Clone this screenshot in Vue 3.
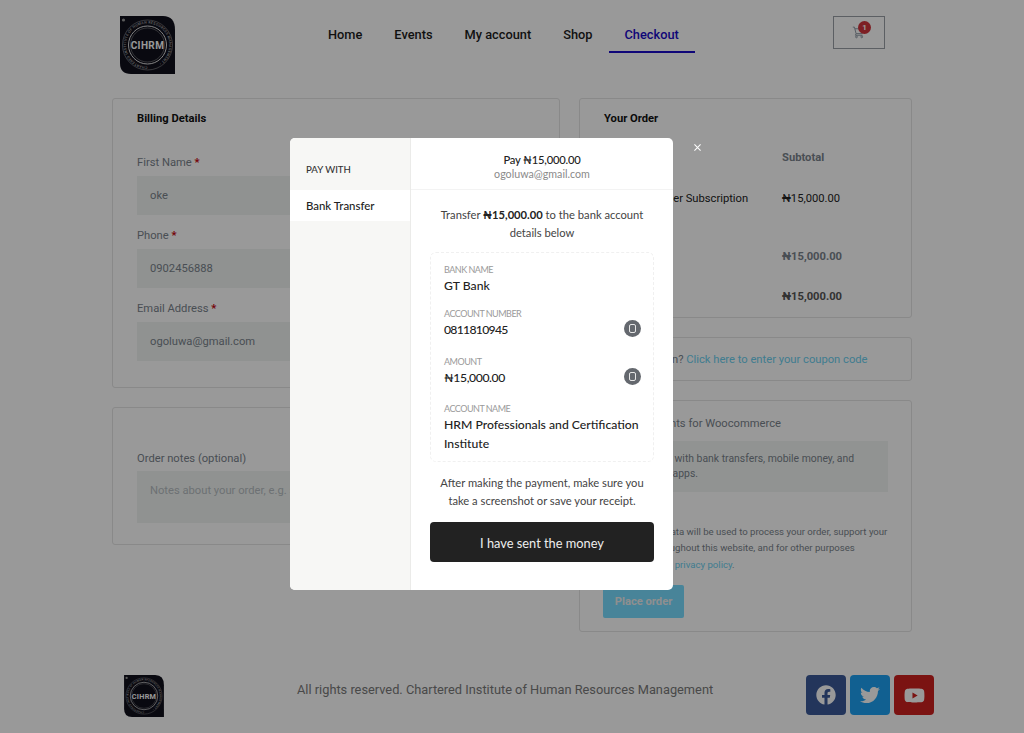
<script setup>
const navItems = ['Home', 'Events', 'My account', 'Shop', 'Checkout']
const fields = [
  { label: 'First Name', value: 'oke' },
  { label: 'Phone', value: '0902456888' },
  { label: 'Email Address', value: 'ogoluwa@gmail.com' }
]
</script>

<template>
  <div class="page">
    <svg class="defs" width="0" height="0" aria-hidden="true">
      <defs>
        <symbol id="logo" viewBox="0 0 55 58">
          <path d="M0 0H43Q55 0 55 14V58H11Q0 58 0 47Z" fill="#10101c" />
          <circle cx="3.5" cy="4" r="1.6" fill="#999" />
          <circle cx="27.5" cy="29" r="25" fill="none" stroke="#aaa" stroke-width=".5" />
          <circle cx="27.5" cy="29" r="19" fill="none" stroke="#ddd" stroke-width="1" />
          <circle cx="27.5" cy="29" r="17" fill="none" stroke="#999" stroke-width=".5" />
          <path id="ring" d="M27.5 50.5A21.5 21.5 0 1 1 27.6 50.5" fill="none" />
          <text class="ring-text"><textPath href="#ring">CHARTERED INSTITUTE OF HUMAN RESOURCES MANAGEMENT •</textPath></text>
          <text class="logo-text" x="27.5" y="32.8" text-anchor="middle">CIHRM</text>
        </symbol>
      </defs>
    </svg>

    <header class="header">
      <svg class="logo"><use href="#logo" /></svg>
      <nav class="nav">
        <a v-for="item in navItems" :key="item" class="nav-link" :class="{ active: item === 'Checkout' }">{{ item }}</a>
      </nav>
      <div class="cart">
        <svg class="cart-icon" viewBox="0 0 16 16" fill="none" stroke="#8f98a4" stroke-width="1.2">
          <path d="M1 2h2l2 8h7.5l1.5-6H3.6" />
          <path d="M5 10l-.8 2H13" />
          <circle cx="5.5" cy="14" r="1.1" />
          <circle cx="12" cy="14" r="1.1" />
        </svg>
        <span class="badge">1</span>
      </div>
    </header>

    <main class="columns">
      <div class="col">
        <section class="card billing">
          <h2 class="title">Billing Details</h2>
          <div v-for="f in fields" :key="f.label" class="field">
            <label class="label">{{ f.label }} <b class="req">*</b></label>
            <div class="input">{{ f.value }}</div>
          </div>
        </section>
        <section class="card notes">
          <label class="label">Order notes (optional)</label>
          <div class="textarea">Notes about your order, e.g. special notes for delivery.</div>
        </section>
      </div>

      <div class="col">
        <section class="card order">
          <h2 class="title">Your Order</h2>
          <div class="order-table">
            <div class="row"><span class="head">Product</span><span class="head">Subtotal</span></div>
            <div class="row spaced"><span>Annual Member Subscription</span><span>₦15,000.00</span></div>
            <div class="row"><span class="head">Subtotal</span><span class="head">₦15,000.00</span></div>
            <div class="row"><span class="total">Total</span><span class="total">₦15,000.00</span></div>
          </div>
        </section>
        <section class="card coupon">
          Have a coupon? <a class="link">Click here to enter your coupon code</a>
        </section>
        <section class="card payment">
          <div class="pay-title">Direct Payments for Woocommerce</div>
          <div class="pay-box">Pay securely with bank transfers, mobile money, and via our bank apps.</div>
          <p class="privacy">Your personal data will be used to process your order, support your experience throughout this website, and for other purposes described in our <a class="link">privacy policy</a>.</p>
          <button class="place">Place order</button>
        </section>
      </div>
    </main>

    <footer class="footer">
      <svg class="foot-logo"><use href="#logo" /></svg>
      <p class="rights">All rights reserved. Chartered Institute of Human Resources Management</p>
      <div class="socials">
        <a class="social fb">
          <svg viewBox="0 0 512 512" width="20" height="20"><path d="M504 256C504 119 393 8 256 8S8 119 8 256c0 123.78 90.69 226.38 209.25 245V327.69h-63V256h63v-54.64c0-62.15 37-96.48 93.67-96.48 27.14 0 55.52 4.84 55.52 4.84v61h-31.28c-30.8 0-40.41 19.12-40.41 38.73V256h68.78l-11 71.69h-57.78V501C413.31 482.38 504 379.78 504 256z" /></svg>
        </a>
        <a class="social tw">
          <svg viewBox="0 0 512 512" width="20" height="20"><path d="M459.37 151.716c.325 4.548.325 9.097.325 13.645 0 138.72-105.583 298.558-298.558 298.558-59.452 0-114.68-17.219-161.137-47.106 8.447.974 16.568 1.299 25.34 1.299 49.055 0 94.213-16.568 130.274-44.832-46.132-.975-84.792-31.188-98.112-72.772 6.498.974 12.995 1.624 19.818 1.624 9.421 0 18.843-1.3 27.614-3.573-48.081-9.747-84.143-51.98-84.143-102.985v-1.299c13.969 7.797 30.214 12.67 47.431 13.319-28.264-18.843-46.781-51.005-46.781-87.391 0-19.492 5.197-37.36 14.294-52.954 51.655 63.675 129.3 105.258 216.365 109.807-1.624-7.797-2.599-15.918-2.599-24.04 0-57.828 46.782-104.934 104.934-104.934 30.213 0 57.502 12.67 76.67 33.137 23.715-4.548 46.456-13.32 66.599-25.34-7.798 24.366-24.366 44.833-46.132 57.827 21.117-2.273 41.584-8.122 60.426-16.243-14.292 20.791-32.161 39.308-52.628 54.253z" /></svg>
        </a>
        <a class="social yt">
          <svg viewBox="0 0 576 512" width="21" height="19"><path d="M549.655 124.083c-6.281-23.65-24.787-42.276-48.284-48.597C458.781 64 288 64 288 64S117.22 64 74.629 75.486c-23.497 6.322-42.003 24.947-48.284 48.597-11.412 42.867-11.412 132.305-11.412 132.305s0 89.438 11.412 132.305c6.281 23.65 24.787 41.5 48.284 47.821C117.22 448 288 448 288 448s170.78 0 213.371-11.486c23.497-6.321 42.003-24.171 48.284-47.821 11.412-42.867 11.412-132.305 11.412-132.305s0-89.438-11.412-132.305zm-317.51 213.508V175.185l142.739 81.205-142.739 81.201z" /></svg>
        </a>
      </div>
    </footer>

    <div class="overlay">
      <div class="modal">
        <button class="close" aria-label="Close">
          <svg viewBox="0 0 8 8" width="7" height="7" stroke="#fff" stroke-width="1.2"><path d="M.5.5l7 7M7.5.5l-7 7" /></svg>
        </button>
        <aside class="side">
          <div class="pay-with">PAY WITH</div>
          <div class="method">Bank Transfer</div>
        </aside>
        <div class="content">
          <div class="m-head">
            <div class="m-pay">Pay ₦15,000.00</div>
            <div class="m-mail">ogoluwa@gmail.com</div>
          </div>
          <div class="m-body">
            <p class="m-text">Transfer <b>₦15,000.00</b> to the bank account details below</p>
            <div class="details">
              <div class="d-row bank">
                <div class="d-label">BANK NAME</div>
                <div class="d-value">GT Bank</div>
              </div>
              <div class="d-row acct-row">
                <div class="d-label">ACCOUNT NUMBER</div>
                <div class="d-value acct">0811810945</div>
                <span class="copy"><i></i></span>
              </div>
              <div class="d-row amount-row">
                <div class="d-label">AMOUNT</div>
                <div class="d-value amount">₦15,000.00</div>
                <span class="copy"><i></i></span>
              </div>
              <div class="d-row">
                <div class="d-label">ACCOUNT NAME</div>
                <div class="d-value">HRM Professionals and Certification Institute</div>
              </div>
            </div>
            <p class="m-text after">After making the payment, make sure you take a screenshot or save your receipt.</p>
            <button class="sent">I have sent the money</button>
          </div>
        </div>
      </div>
    </div>
  </div>
</template>

<style>
html, body { margin: 0; background: #fff; }
</style>

<style scoped>
.page {
  position: relative;
  width: 1024px;
  height: 733px;
  overflow: hidden;
  background: #fff;
  font-family: Roboto, "Liberation Sans", sans-serif;
  font-size: 11.2px;
  color: #333;
}
.defs { position: absolute; }
:deep(.ring-text) { font: 500 3.6px Roboto, sans-serif; fill: #aaa; letter-spacing: .3px; }
:deep(.logo-text) { font: 700 10px Roboto, sans-serif; fill: #fff; letter-spacing: .4px; }

.header { display: flex; height: 98px; }
.logo { width: 55px; height: 58px; margin: 16px 0 0 120px; }
.nav { display: flex; margin-left: 137px; height: 53px; }
.nav-link {
  padding: 26.5px 16px 0;
  font-size: 12.8px;
  font-weight: 500;
  line-height: 15px;
  box-sizing: border-box;
  color: #1c1c1c;
  border-bottom: 2px solid transparent;
}
.nav-link.active { color: #1a0ac8; border-bottom-color: #1a0ac8; }
.cart {
  position: relative;
  display: flex;
  align-items: center;
  justify-content: center;
  box-sizing: border-box;
  width: 52px;
  height: 33px;
  margin: 16px 139px 0 auto;
  border: 1px solid #9a9ea6;
}
.cart-icon { width: 13px; height: 14px; margin-right: 2px; margin-top: -1px; }
.badge {
  position: absolute;
  top: 4px;
  left: 24px;
  width: 13px;
  height: 13px;
  border-radius: 50%;
  background: #d1353c;
  color: #fff;
  font-size: 8px;
  font-weight: 700;
  line-height: 13px;
  text-align: center;
}

.columns { display: grid; grid-template-columns: 448px 333px; gap: 19px; margin-left: 112px; }
.col { display: flex; flex-direction: column; gap: 19px; }
.card { box-sizing: border-box; border: 1px solid #e4e4e4; border-radius: 3px; }
.title { margin: 0; font-size: 11.2px; font-weight: 700; line-height: 14px; color: #111; }

.billing { height: 290px; padding: 13px 24px 0; }
.billing .title { margin-bottom: 29px; }
.field { margin-bottom: 13px; }
.label { display: block; padding-top: 1px; font-size: 11.2px; line-height: 14px; margin-bottom: 6px; color: #7a838c; }
.req { color: #c3000a; font-weight: 700; }
.input {
  height: 39px;
  padding: 0 13px;
  background: #f0f4f2;
  font-size: 11.2px;
  line-height: 39px;
  color: #7a838c;
}
.notes { height: 138px; padding: 43px 24px 0; }
.notes .label { margin-bottom: 5px; }
.textarea {
  height: 52px;
  padding: 0 13px;
  background: #f0f4f2;
  line-height: 40px;
  color: #b6bcc1;
  white-space: nowrap;
  overflow: hidden;
}

.order { height: 220px; padding: 13px 24px 0; }
.order-table { margin-top: 12px; }
.row { display: grid; grid-template-columns: 178px 1fr; height: 40px; line-height: 40px; color: #222; }
.row.spaced { margin-bottom: 18px; height: 41px; line-height: 42px; }
.head { font-weight: 700; color: #7a838c; }
.total { font-weight: 700; color: #555; }
.coupon { height: 44px; padding: 0 24px; line-height: 43px; color: #7a838c; }
.link { color: #6bd0f0; }
.payment { height: 232px; padding: 15px 24px 0; position: relative; }
.pay-title { font-size: 11.2px; line-height: 15px; color: #7a838c; }
.pay-box {
  margin-top: 10px;
  height: 51px;
  padding: 10px 25px 0 10px;
  box-sizing: border-box;
  background: #f2f6f4;
  font-size: 10.4px;
  line-height: 15px;
  color: #7a838c;
  width: 284px;
}
.privacy { margin: 31px 0 0; padding-top: .5px; font-size: 9.6px; line-height: 16.5px; color: #7a838c; width: 290px; }
.place {
  display: block;
  margin: 12px 0 0 -1px;
  width: 81px;
  height: 33px;
  padding: 0;
  border: 0;
  border-radius: 2px;
  background: #78dcff;
  color: #eee;
  font: 700 11.2px Roboto, sans-serif;
}

.footer { display: flex; align-items: flex-start; margin-top: 43px; }
.foot-logo { width: 40px; height: 42px; margin-left: 124px; }
.rights { margin: 7px 0 0 133px; font-size: 12.8px; line-height: 16px; color: #7a7a7a; }
.socials { display: flex; gap: 4px; margin-left: auto; margin-right: 90px; }
.social { display: flex; align-items: center; justify-content: center; width: 40px; height: 40px; border-radius: 4px; }
.social svg { fill: #fff; }
.fb { background: #3b5998; }
.tw { background: #1da1f2; }
.yt { background: #cd201f; }

.overlay {
  position: absolute;
  inset: 0;
  background: rgba(0, 0, 0, .4);
  font-family: Lato, "Noto Sans", sans-serif;
}
.modal {
  position: absolute;
  left: 290px;
  top: 138px;
  display: flex;
  width: 383px;
  height: 452px;
  border-radius: 5px;
  background: #fff;
}
.close {
  position: absolute;
  left: 403px;
  top: 5px;
  display: flex;
  align-items: center;
  justify-content: center;
  width: 8px;
  height: 8px;
  padding: 0;
  border: 0;
  background: none;
}
.side {
  width: 121px;
  flex: none;
  box-sizing: border-box;
  border-right: 1px solid #ebebe9;
  border-radius: 5px 0 0 5px;
  background: #f7f7f5;
}
.pay-with { height: 52px; padding: 25px 0 0 16px; box-sizing: border-box; font-size: 9.6px; font-weight: 500; line-height: 14px; color: #333; }
.method { height: 31px; padding-left: 16px; background: #fff; font-size: 11.4px; font-weight: 500; line-height: 32px; color: #222; }
.content { flex: 1; min-width: 0; }
.m-head { height: 52px; padding-top: 15px; box-sizing: border-box; border-bottom: 1px solid #f3f3f3; text-align: center; }
.m-pay { font-size: 11.2px; font-weight: 500; line-height: 14px; letter-spacing: -.2px; color: #222; }
.m-mail { font-size: 10.7px; line-height: 13px; color: #8a8a8a; }
.m-body { padding: 16px 19px 0; }
.m-text { margin: 0; font-size: 11.2px; line-height: 18px; text-align: center; color: #444; }
.m-text b { color: #222; font-weight: 700; }
.details {
  box-sizing: border-box;
  height: 210px;
  margin-top: 10px;
  padding: 11px 0 0 13px;
  border: 1px dashed #f0f0f0;
  border-radius: 6px;
}
.d-row { position: relative; }
.d-row.bank { margin-bottom: 13px; }
.d-row.acct-row { margin-bottom: 17px; }
.d-row.amount-row { margin-bottom: 16px; }
.d-label { font-size: 9px; line-height: 12px; letter-spacing: -.5px; color: #9a9a9a; }
.d-value { font-size: 12.2px; font-weight: 500; line-height: 19px; color: #222; }
.d-value.acct { letter-spacing: -.7px; }
.d-value.amount { letter-spacing: -.4px; }
.copy {
  position: absolute;
  right: 12px;
  top: 12px;
  display: flex;
  align-items: center;
  justify-content: center;
  width: 17px;
  height: 17px;
  border-radius: 50%;
  background: #64686e;
}
.copy i { display: block; box-sizing: border-box; width: 7px; height: 9px; border: 1.4px solid #e6e6e6; border-radius: 2px; }
.after { margin-top: 12px; }
.sent {
  display: block;
  box-sizing: border-box;
  width: 100%;
  height: 40px;
  margin-top: 12px;
  padding: 1px 0 0;
  border: 0;
  border-radius: 4px;
  background: #222;
  color: #eee;
  font: 400 12.8px Lato, sans-serif;
}
</style>
